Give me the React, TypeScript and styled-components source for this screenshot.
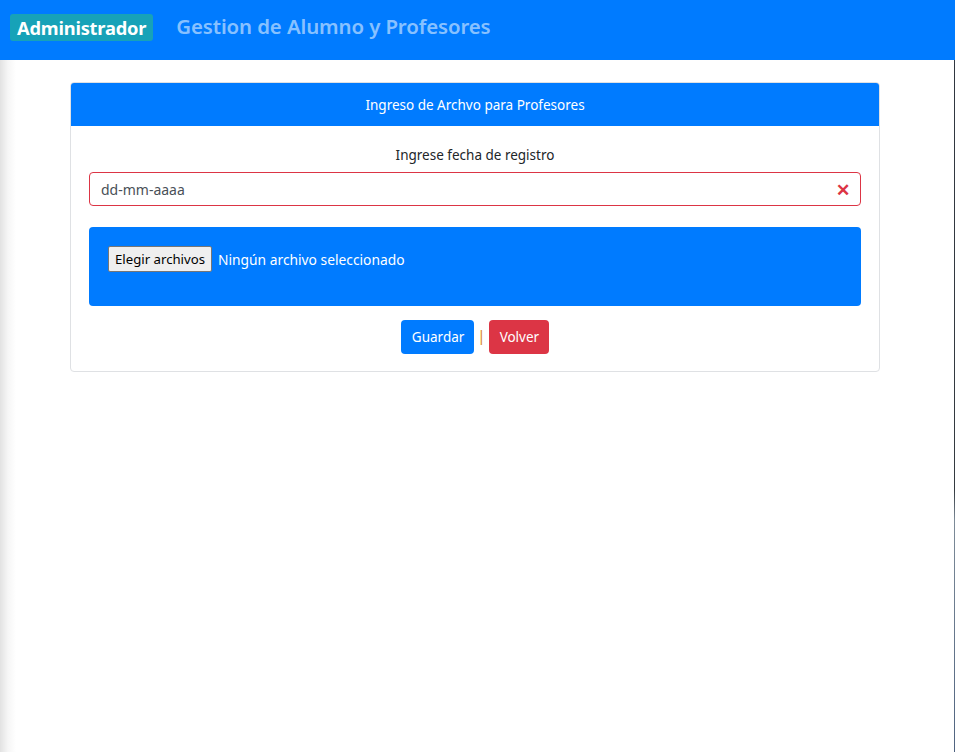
import React from "react";
import styled, { createGlobalStyle } from "styled-components";

const Global = createGlobalStyle`
  html, body { margin: 0; padding: 0; }
  body {
    min-height: 752px;
    font-family: "Noto Sans", "Open Sans", sans-serif;
    color: #212529;
    background:
      linear-gradient(to bottom, #2f3640 0, #343a40 490px, #7d8b98 520px, #4f6380 752px) right top / 1px 100% no-repeat,
      linear-gradient(to right, #e2e2e2 0, #f6f6f6 8px, #ffffff 16px) left top / 100% 100% no-repeat,
      #fff;
  }
`;

const Navbar = styled.header`
  height: 60px;
  background: #007bff;
  display: flex;
  align-items: center;
  padding: 0 10px;
  box-sizing: border-box;
  gap: 23px;
`;

const Brand = styled.span`
  background: #17a2b8;
  color: #fff;
  font-weight: 700;
  font-size: 18.3px;
  line-height: 27px;
  padding: 0 7px;
  border-radius: 3px;
  margin-top: -6px;
  letter-spacing: -0.2px;
`;

const Title = styled.span`
  color: rgba(255, 255, 255, 0.55);
  font-size: 20.4px;
  font-weight: 600;
  margin-top: -8px;
  letter-spacing: -0.1px;
`;

const Main = styled.main`
  padding: 22px 75px 0 70px;
`;

const Card = styled.section`
  border: 1px solid #dfe1e4;
  border-radius: 4px;
  overflow: hidden;
`;

const CardHeader = styled.div`
  background: #007bff;
  color: #fff;
  height: 43px;
  display: flex;
  align-items: center;
  justify-content: center;
  font-size: 13.5px;
`;

const CardBody = styled.div`
  padding: 20px 18px 17px;
  display: flex;
  flex-direction: column;
`;

const Label = styled.div`
  text-align: center;
  font-size: 13.5px;
  margin-bottom: 8px;
`;

const DateField = styled.div`
  height: 34px;
  box-sizing: border-box;
  border: 1px solid #dc3545;
  border-radius: 4px;
  display: flex;
  align-items: center;
  justify-content: space-between;
  padding: 0 10px 0 11px;
  color: #495057;
  font-size: 14px;
`;

const ClearIcon = styled.span`
  color: #dc3545;
  font-weight: 700;
  font-size: 17px;
  line-height: 1;
`;

const UploadBox = styled.div`
  margin-top: 21px;
  height: 79px;
  box-sizing: border-box;
  background: #007bff;
  border-radius: 4px;
  padding: 19px 19px;
  display: flex;
  align-items: flex-start;
  gap: 6px;
  color: #fff;
  font-size: 13.8px;
`;

const FileButton = styled.span`
  background: #efefef;
  color: #000;
  border: 1px solid #767676;
  border-radius: 2px;
  height: 26px;
  box-sizing: border-box;
  padding: 0 6px;
  display: inline-flex;
  align-items: center;
  font-size: 13.2px;
`;

const FileText = styled.span`
  line-height: 27px;
`;

const Actions = styled.div`
  margin-top: 14px;
  display: flex;
  justify-content: center;
  align-items: center;
  gap: 4px;
`;

const Btn = styled.button<{ $variant: "primary" | "danger" }>`
  background: ${(p) => (p.$variant === "primary" ? "#007bff" : "#dc3545")};
  color: #fff;
  border: none;
  border-radius: 4px;
  height: 34px;
  padding: 0 10px 0 11px;
  font-family: inherit;
  font-size: 13.5px;
`;

const Sep = styled.span`
  color: #d9882a;
  font-size: 15px;
  margin: -4px -1px 0;
`;

export default function App() {
  return (
    <>
      <Global />
      <Navbar>
        <Brand>Administrador</Brand>
        <Title>Gestion de Alumno y Profesores</Title>
      </Navbar>
      <Main>
        <Card>
          <CardHeader>Ingreso de Archvo para Profesores</CardHeader>
          <CardBody>
            <Label>Ingrese fecha de registro</Label>
            <DateField>
              <span>dd-mm-aaaa</span>
              <ClearIcon>✕</ClearIcon>
            </DateField>
            <UploadBox>
              <FileButton>Elegir archivos</FileButton>
              <FileText>Ningún archivo seleccionado</FileText>
            </UploadBox>
            <Actions>
              <Btn $variant="primary">Guardar</Btn>
              <Sep>|</Sep>
              <Btn $variant="danger">Volver</Btn>
            </Actions>
          </CardBody>
        </Card>
      </Main>
    </>
  );
}
